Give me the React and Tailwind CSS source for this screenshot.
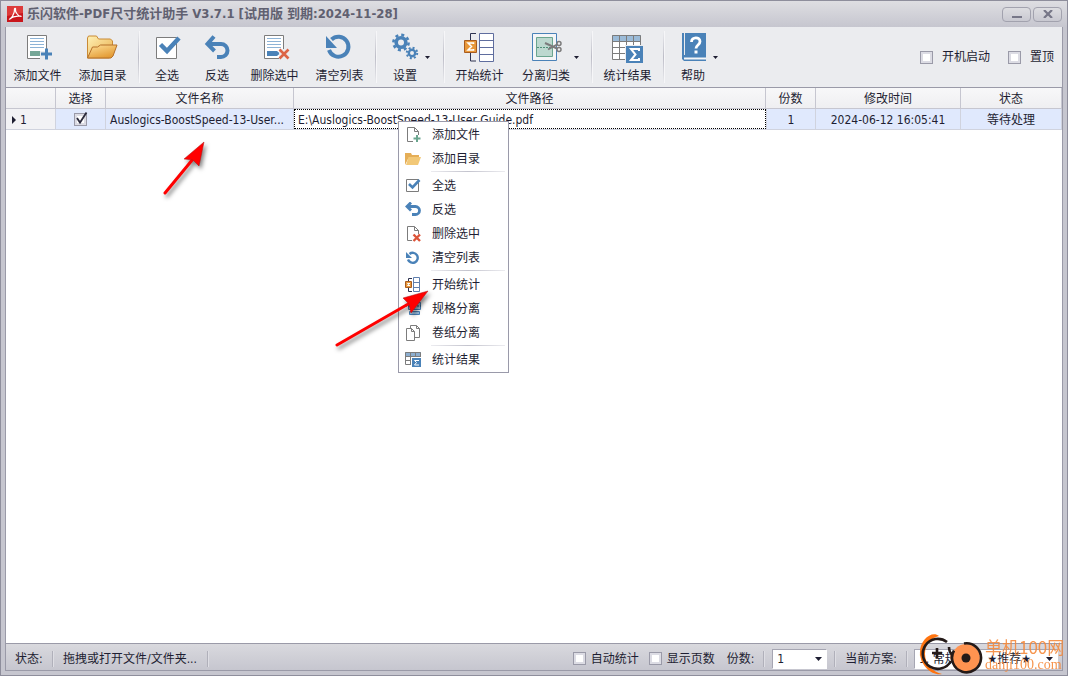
import React, { useState } from "react";
import clsx from "clsx";

const BLUE = "#4a82b8";
const GRAY = "#7c7c7c";

const AddFileIcon = () => (
  <svg width="32" height="32" viewBox="0 0 32 32">
    <path d="M6.500 4.500h19v23h-19z" fill="#fff" stroke={GRAY} />
    <path d="M9 7.500h14M9 10.500h14M9 13.500h14M9 16.500h14" stroke="#8db3d6" />
    <path d="M9 20h10v5H9z" fill="#76a797" />
    <path d="M19 20h12v9H19z" fill="#ebecef" />
    <path d="M25.500 17.500v11M20 23h11" stroke={BLUE} strokeWidth="3" />
  </svg>
);

const FolderIcon = () => (
  <svg width="32" height="32" viewBox="0 0 32 32">
    <defs>
      <linearGradient id="folderBack" x1="0" y1="0" x2="1" y2="1">
        <stop offset="0" stopColor="#fff1b5" />
        <stop offset="1" stopColor="#e9ad4b" />
      </linearGradient>
      <linearGradient id="folderFront" x1="0" y1="0" x2="0.6" y2="1">
        <stop offset="0" stopColor="#ffe19a" />
        <stop offset="1" stopColor="#e39a33" />
      </linearGradient>
    </defs>
    <path d="M1.500 27V7l1-2h8l2 3h12l2 2v14l-3 3z" fill="url(#folderBack)" stroke="#c98a35" />
    <path d="M1.500 27l5-11h5l3-2h16.500l-4 11-2 2z" fill="url(#folderFront)" stroke="#b5702a" />
  </svg>
);

const SelectAllIcon = () => (
  <svg width="32" height="32" viewBox="0 0 32 32">
    <path d="M5.500 6.500h20v21h-20z" fill="#fff" stroke={GRAY} />
    <path d="M9.500 13.500l6.500 6.500L28 7" fill="none" stroke={BLUE} strokeWidth="4.500" />
  </svg>
);

const InvertIcon = () => (
  <svg width="32" height="32" viewBox="0 0 32 32">
    <path d="M13 5.500L6.500 13l7 7M7 13h13a6.500 6.500 0 0 1 0 13h-4" fill="none" stroke={BLUE} strokeWidth="4" />
  </svg>
);

const DeleteIcon = () => (
  <svg width="32" height="32" viewBox="0 0 32 32">
    <path d="M6.500 4.500h19v23h-19z" fill="#fff" stroke={GRAY} />
    <path d="M9 7.500h14M9 10.500h14M9 13.500h14M9 16.500h14" stroke="#8db3d6" />
    <path d="M9 20h10l3 2.500-3 2.500H9z" fill={BLUE} />
    <path d="M21 18h9v11h-9z" fill="#ebecef" />
    <path d="M21.500 18.500l9 9M30.500 18.500l-9 9" stroke="#dc6446" strokeWidth="2.600" />
  </svg>
);

const ClearIcon = () => (
  <svg width="32" height="32" viewBox="0 0 32 32">
    <path d="M6 19A10 10 0 1 0 8.500 8.500" fill="none" stroke={BLUE} strokeWidth="4" />
    <path d="M3 5v12h11z" fill={BLUE} />
  </svg>
);

const GearIcon = () => (
  <svg width="32" height="32" viewBox="0 0 32 32" fill="none" stroke={BLUE}>
    <circle cx="12" cy="11.500" r="4.800" strokeWidth="3.600" />
    <circle cx="12" cy="11.500" r="7.600" strokeWidth="2.600" strokeDasharray="3 2.970" />
    <circle cx="23" cy="22" r="3.200" strokeWidth="2.400" />
    <circle cx="23" cy="22" r="5.200" strokeWidth="2" strokeDasharray="2 2.080" />
  </svg>
);

const StartIcon = () => (
  <svg width="32" height="32" viewBox="0 0 32 32">
    <path d="M13 2.500H7.500v8M7.500 21v9H13" fill="none" stroke="#2e3350" />
    <path d="M16.500 2.500h14v28h-14zM16.500 9.500h14M16.500 16.500h14M16.500 23.500h14" fill="#fff" stroke="#5f6d9e" />
    <path d="M1.500 9.500h12v12h-12z" fill="#e8983a" stroke="#a85c1f" />
    <path d="M10.500 13v-1H5l3.500 3.500L5 19h5.500v-1" fill="none" stroke="#fff" strokeWidth="1.500" />
  </svg>
);

const SplitIcon = () => (
  <svg width="32" height="32" viewBox="0 0 32 32">
    <path d="M2.500 2.500h24v27h-24z" fill="#f4f5f7" stroke={BLUE} />
    <path d="M6.500 6.500h16v19h-16z" fill="#bcd8cf" stroke="#6ba58f" />
    <path d="M7 16.500h16" stroke="#4f8f78" strokeDasharray="2 1" />
    <path d="M15 12l12 5.500M18 18.500l9-5" stroke={GRAY} strokeWidth="2" />
    <circle cx="29" cy="12.500" r="2" fill="none" stroke={GRAY} strokeWidth="1.500" />
    <circle cx="29" cy="18.500" r="2" fill="none" stroke={GRAY} strokeWidth="1.500" />
  </svg>
);

const ResultIcon = () => (
  <svg width="32" height="32" viewBox="0 0 32 32">
    <path d="M1.500 4.500h28v24h-28z" fill="#fff" />
    <path d="M1 4h29v6H1z" fill="#9bbbd8" />
    <path d="M1.500 4.500h28v24h-28zM1 10.500h29M1 16.500h29M1 22.500h29M8.500 4v25M15.500 4v25M22.500 4v25" fill="none" stroke={GRAY} />
    <path d="M14 14h18v18H14z" fill="#ebecef" />
    <path d="M15 15h17v17H15z" fill={BLUE} />
    <path d="M28 20v-2h-8l4.500 5.500L20 29h8v-2" fill="none" stroke="#fff" strokeWidth="2" />
  </svg>
);

const HelpIcon = () => (
  <svg width="32" height="32" viewBox="0 0 32 32">
    <path d="M5 2h2v24H5zM8 2h21v23H8z" fill={BLUE} />
    <path d="M5 24h24v6H7l-2-2z" fill={BLUE} />
    <path d="M7 26.500h22v2H7z" fill="#f4f6f8" />
    <path d="M14.500 11c0-5.500 8.500-5.500 8.500-.5 0 3.500-4 3.500-4 7" fill="none" stroke="#fff" strokeWidth="2.800" />
    <path d="M17.500 19.500h3v3h-3z" fill="#fff" />
  </svg>
);

const toolbar = [
  [
    { label: "添加文件", Icon: AddFileIcon },
    { label: "添加目录", Icon: FolderIcon },
  ],
  [
    { label: "全选", Icon: SelectAllIcon },
    { label: "反选", Icon: InvertIcon },
    { label: "删除选中", Icon: DeleteIcon },
    { label: "清空列表", Icon: ClearIcon },
  ],
  [{ label: "设置", Icon: GearIcon, dropdown: true }],
  [
    { label: "开始统计", Icon: StartIcon },
    { label: "分离归类", Icon: SplitIcon, dropdown: true },
  ],
  [{ label: "统计结果", Icon: ResultIcon }],
  [{ label: "帮助", Icon: HelpIcon, dropdown: true }],
];

const pageShape = <path d="M2.500.5h7l4 4v10h-11zM9.500.5v4h4" fill="#fff" stroke={GRAY} />;

const menuGroups = [
  [
    {
      label: "添加文件",
      icon: (
        <>
          {pageShape}
          <path d="M8 8h8v8H8z" fill="#fff" />
          <path d="M12 8v7M8.500 11.500h7" stroke="#6ba58f" strokeWidth="2" />
        </>
      ),
    },
    {
      label: "添加目录",
      icon: (
        <>
          <path d="M0 14V2h6l1 2h7v4H3z" fill="#e5ae57" />
          <path d="M3.500 6H16l-3 8H1z" fill="#f2c877" />
        </>
      ),
    },
  ],
  [
    {
      label: "全选",
      icon: (
        <>
          <path d="M1.500 1.500h12v12h-12z" fill="#fff" stroke={GRAY} />
          <path d="M4 6l3.500 3.500 7-7.500" fill="none" stroke={BLUE} strokeWidth="2.600" />
        </>
      ),
    },
    {
      label: "反选",
      icon: <path d="M6 .5L2 4.500l4 4M2 4.500h8.500a3.500 3.500 0 0 1 0 8H7" fill="none" stroke={BLUE} strokeWidth="2.800" />,
    },
    {
      label: "删除选中",
      icon: (
        <>
          {pageShape}
          <path d="M7 8h9v8H7z" fill="#fff" />
          <path d="M8.500 8.500l6.500 6.500M15 8.500l-6.500 6.500" stroke="#dc5439" strokeWidth="2.400" />
        </>
      ),
    },
    {
      label: "清空列表",
      icon: (
        <>
          <path d="M3 9.500A5 5 0 1 0 4.500 4" fill="none" stroke={BLUE} strokeWidth="2.400" />
          <path d="M1 2v6h6z" fill={BLUE} />
        </>
      ),
    },
  ],
  [
    {
      label: "开始统计",
      icon: (
        <>
          <path d="M7 1.500H3.500V5M3.500 11v3.500H7" fill="none" stroke="#2e3350" />
          <path d="M8.500.5h6v14h-6zM8.500 5.500h6M8.500 10.500h6" fill="#fff" stroke="#5f7fae" />
          <path d="M.5 4.500h6v6h-6z" fill="#e8983a" stroke="#a85c1f" />
          <path d="M5 6.500H2.500L4 7.500 2.500 8.500H5" fill="none" stroke="#fff" />
        </>
      ),
    },
    {
      label: "规格分离",
      icon: (
        <>
          <path d="M3.500 1.500h12v7h-12z" fill="#b5d0e6" stroke={BLUE} />
          <path d="M0 5h16" stroke="#2e4e70" strokeDasharray="2 1" />
          <path d="M4.500 10.500h10v3h-10z" fill="#9bbfe0" stroke={BLUE} />
        </>
      ),
    },
    {
      label: "卷纸分离",
      icon: (
        <>
          <path d="M5.500.5h6l3 3v9h-9zM11.500.5v3h3" fill="#fff" stroke={GRAY} />
          <path d="M1.500 3.500h5l3 3v9h-8zM6.500 3.500v3h3" fill="#fff" stroke={GRAY} />
        </>
      ),
    },
  ],
  [
    {
      label: "统计结果",
      icon: (
        <>
          <path d="M0 0h16v4H0z" fill="#8caed0" />
          <path d="M.5.5h15v12H.5zM0 4.500h16M0 8.500h16M5.500 0v13M10.500 0v13" fill="none" stroke={GRAY} />
          <path d="M6 5h10v10H6z" fill="#fff" />
          <path d="M7 6h9v9H7z" fill={BLUE} />
          <path d="M14 8.500H9.500l2 2-2 2.500H14" fill="none" stroke="#fff" />
        </>
      ),
    },
  ],
];

const Divider = () => (
  <span className="mr-0.5 ml-[3px] my-1 w-0.5 self-stretch border-r border-[#f6f6f8] bg-gradient-to-b from-[#ebecef] via-[#bdbdc7] to-[#ebecef]" />
);

const StatusDivider = () => (
  <span className="h-4 w-0.5 shrink-0 border-r border-[#dedee4] bg-[#b0b0ba]" />
);

const Caret = () => (
  <svg width="5" height="3" viewBox="0 0 5 3" className="shrink-0">
    <path d="M0 0h5L2.500 3z" fill="#1e1e32" />
  </svg>
);

const ToolButton = ({ label, Icon, dropdown }) => {
  const wide = label.length > 2;
  return (
    <button
      type="button"
      className={clsx(
        "flex shrink-0 items-center pt-px whitespace-nowrap",
        dropdown ? "pl-1.5" : "justify-center",
        dropdown && (wide ? "w-[76px]" : "w-[61px]"),
        !dropdown && (wide ? "w-[65px]" : "w-[50px]")
      )}
    >
      <span
        className={clsx(
          "flex flex-col items-center gap-[5px]",
          dropdown && (wide ? "w-14" : "w-10")
        )}
      >
        <Icon />
        <span className="leading-4">{label}</span>
      </span>
      {dropdown && <Caret />}
    </button>
  );
};

const CheckOption = ({ label, className }) => (
  <label className={clsx("flex items-center whitespace-nowrap", className)}>
    <input
      type="checkbox"
      className="size-[13px] appearance-none border border-[#9a9aa8] bg-white ring-2 ring-inset ring-[#dcdce4] checked:bg-[#4a82b8]"
    />
    {label}
  </label>
);

const StatusSelect = ({ id, className, children }) => (
  <span className={clsx("relative flex items-center", className)}>
    <select
      id={id}
      className="h-5 w-full appearance-none border border-t-[#a6a6b2] border-r-white border-b-white border-l-[#a6a6b2] bg-white pl-1"
    >
      {children}
    </select>
    <svg width="7" height="4" viewBox="0 0 7 4" className="pointer-events-none absolute right-[5px]">
      <path d="M0 0h7L3.500 4z" fill="#1e1e32" />
    </svg>
  </span>
);

const TitleBar = () => (
  <header className="flex h-[26px] shrink-0 items-center">
    <svg width="16" height="16" viewBox="0 0 16 16" className="ml-0.5 shrink-0">
      <path d="M0 0h16v16H0z" fill="#c9151b" />
      <path d="M0 0h16v7L0 10z" fill="#dd3b3a" />
      <path d="M2 13c2 1 6-6 5.500-10 0-1 1.500-1 1 .5C8 6 11 10 14 10.500c1-.5-6-1-11 2" fill="none" stroke="#fff" strokeWidth="1.200" />
    </svg>
    <h1 className="ml-1 grow truncate text-[13px] leading-5 font-bold text-[#606070]">
      乐闪软件-PDF尺寸统计助手 V3.7.1 [试用版 到期:2024-11-28]
    </h1>
    <div className="mr-px flex gap-0.5">
      <button
        type="button"
        aria-label="最小化"
        className="flex h-[15px] w-[29px] items-center justify-center rounded-sm border border-[#a2a2ae] bg-gradient-to-b from-[#dddde1] to-[#c9c9d1]"
      >
        <svg width="10" height="8" viewBox="0 0 10 8">
          <path d="M0 6h10v2H0z" fill="#777788" />
        </svg>
      </button>
      <button
        type="button"
        aria-label="关闭"
        className="flex h-[15px] w-[29px] items-center justify-center rounded-sm border border-[#a2a2ae] bg-gradient-to-b from-[#dddde1] to-[#c9c9d1]"
      >
        <svg width="10" height="8" viewBox="0 0 10 8">
          <path d="M1 0l8 8M9 0L1 8" stroke="#777788" strokeWidth="2.200" />
        </svg>
      </button>
    </div>
  </header>
);

const Toolbar = () => (
  <div className="flex h-[60px] shrink-0 items-stretch bg-[#ebecef]">
    <div className="-ml-px flex">
      {toolbar.map((group, i) => (
        <React.Fragment key={group[0].label}>
          {i > 0 && <Divider />}
          {group.map((item) => (
            <ToolButton key={item.label} {...item} />
          ))}
        </React.Fragment>
      ))}
    </div>
    <div className="ml-auto flex items-center gap-[18px] pr-2">
      <CheckOption label="开机启动" className="gap-[9px]" />
      <CheckOption label="置顶" className="gap-[9px]" />
    </div>
  </div>
);

const headers = ["", "选择", "文件名称", "文件路径", "份数", "修改时间", "状态"];

const FileTable = () => {
  const [checked, setChecked] = useState(true);

  return (
    <table className="w-full table-fixed border-separate border-spacing-0 text-center leading-4">
      <colgroup>
        <col className="w-[50px]" />
        <col className="w-[50px]" />
        <col className="w-[188px]" />
        <col />
        <col className="w-[50px]" />
        <col className="w-[145px]" />
        <col className="w-[101px]" />
      </colgroup>
      <thead>
        <tr className="h-[21px] bg-gradient-to-b from-[#f8f8f9] to-[#eeeef1]">
          {headers.map((h) => (
            <th key={h} className="border-r border-b border-[#c6c6d0] p-0 pt-0.5 font-normal">
              {h}
            </th>
          ))}
        </tr>
      </thead>
      <tbody>
        <tr className="h-[21px] bg-[#e0e9fd] *:border-b *:border-[#d0d3de] *:p-0">
          <td className="border-r bg-[#f2f2f5]">
            <span className="flex items-center gap-1 pt-0.5 pl-1.5">
              <svg width="4" height="8" viewBox="0 0 4 8">
                <path d="M0 0l4 4-4 4z" fill="#1e1e32" />
              </svg>
              1
            </span>
          </td>
          <td className="border-r">
            <label className="relative flex items-center justify-center">
              <input
                type="checkbox"
                aria-label="选择文件"
                checked={checked}
                onChange={(e) => setChecked(e.target.checked)}
                className="size-[13px] appearance-none border border-[#9a9aa8] bg-white ring-2 ring-inset ring-[#dcdce4]"
              />
              {checked && (
                <svg width="14" height="14" viewBox="0 0 14 14" className="pointer-events-none absolute">
                  <path d="M3 6l3 4.500L12.500.5" fill="none" stroke="#2a2a3c" strokeWidth="1.800" />
                </svg>
              )}
            </label>
          </td>
          <td className="border-r text-left">
            <span className="block truncate pt-0.5 pl-1">Auslogics-BoostSpeed-13-User...</span>
          </td>
          <td className="text-left">
            <span className="block truncate border border-dotted border-black bg-white pt-0.5 pl-[3px]">
              E:\Auslogics-BoostSpeed-13-User Guide.pdf
            </span>
          </td>
          <td className="border-r border-l">
            <span className="block pt-0.5">1</span>
          </td>
          <td className="border-r">
            <span className="block pt-0.5">2024-06-12 16:05:41</span>
          </td>
          <td className="border-r">
            <span className="block pt-0.5">等待处理</span>
          </td>
        </tr>
      </tbody>
    </table>
  );
};

const ContextMenu = () => (
  <div
    role="menu"
    className="absolute top-[120px] left-[397px] w-[111px] border border-[#9a9aaa] bg-white pb-px"
  >
    {menuGroups.map((group, i) => (
      <React.Fragment key={group[0].label}>
        {i > 0 && (
          <div className="ml-8 flex h-[3px] items-center">
            <div className="h-px w-[74px] bg-gradient-to-r from-[#ececf0] via-[#c4c4ce] to-[#ececf0]" />
          </div>
        )}
        {group.map((item) => (
          <button
            key={item.label}
            type="button"
            role="menuitem"
            className="flex h-6 w-full items-center gap-[11px] pt-px pl-1.5 hover:bg-[#e0e9fd]"
          >
            <svg width="16" height="16" viewBox="0 0 16 16">
              {item.icon}
            </svg>
            {item.label}
          </button>
        ))}
      </React.Fragment>
    ))}
  </div>
);

const StatusBar = () => (
  <footer className="flex h-[27px] shrink-0 items-center border-t border-[#9a9aa8] bg-gradient-to-b from-[#d9d9de] to-[#c6c6cf] pt-[3px] pr-1 whitespace-nowrap">
    <span className="w-[46px] pl-[9px]">状态:</span>
    <StatusDivider />
    <span className="w-[153px] pl-[9px]">拖拽或打开文件/文件夹...</span>
    <StatusDivider />
    <CheckOption label="自动统计" className="ml-auto gap-[5px]" />
    <CheckOption label="显示页数" className="ml-2.5 gap-[5px]" />
    <label htmlFor="copies" className="mr-[9px] ml-3">
      份数:
    </label>
    <StatusDivider />
    <StatusSelect id="copies" className="mx-[7px] w-[55px]">
      <option>1</option>
      <option>2</option>
      <option>3</option>
    </StatusSelect>
    <StatusDivider />
    <label htmlFor="plan" className="mx-[9px]">
      当前方案:
    </label>
    <StatusDivider />
    <StatusSelect id="plan" className="ml-[6px] w-36">
      <option>1. 常规模式{"\u00a0\u00a0"}★推荐★</option>
    </StatusSelect>
  </footer>
);

const Arrow = ({ className, width, height, shaft, head }) => (
  <svg
    width={width}
    height={height}
    viewBox={`0 0 ${width} ${height}`}
    className={clsx("pointer-events-none absolute drop-shadow-[2px_3px_2px_rgba(0,0,0,0.5)]", className)}
  >
    <path d={shaft} stroke="#f00" strokeWidth="3" strokeLinecap="round" />
    <path d={head} fill="#f00" stroke="#b01010" strokeWidth="0.500" />
  </svg>
);

const Watermark = () => (
  <div className="pointer-events-none absolute right-0 bottom-0 flex items-center">
    <svg width="68" height="44" viewBox="0 0 68 44">
      <path d="M22 5C15-1 2 9 3 23c1 12 12 22 22 20-9-2-17-10-17-20S14 7 22 5z" fill="#ff7410" />
      <path d="M30 11a15 15 0 1 0 4 19" fill="none" stroke="#241a18" strokeWidth="2.600" />
      <path d="M20 17v10M15 22h10M32 16c0 5 3 8 5 9" fill="none" stroke="#241a18" strokeWidth="2.600" />
      <circle cx="49" cy="27" r="14" fill="#ff9350" />
      <path d="M47 12.500a14.500 14.500 0 1 1-10 7" fill="none" stroke="#241a18" strokeWidth="2.600" />
      <circle cx="49" cy="27" r="4.500" fill="#241a18" />
    </svg>
    <div className="w-[82px] pt-1 whitespace-nowrap text-[#f58a3c] opacity-90">
      <div className="font-['Noto_Sans_CJK_SC',sans-serif] text-[17px] leading-5">单机100网</div>
      <div className="font-['Liberation_Serif',serif] text-[14px] leading-4">danji100.com</div>
    </div>
  </div>
);

const App = () => (
  <div className="relative flex min-h-screen flex-col border border-[#8e8e9c] bg-gradient-to-b from-[#dedee2] via-[#c6c6cf] via-[26px] to-[#c6c6cf] px-1 pb-1 font-['DejaVu_Sans_Condensed','Noto_Sans','Noto_Sans_CJK_SC',sans-serif] text-[12px] text-[#1e1e32]">
    <TitleBar />
    <div className="flex grow flex-col border border-t-0 border-[#9a9aa8]">
      <Toolbar />
      <main className="grow border-t border-[#9a9aa8] bg-white">
        <FileTable />
      </main>
      <StatusBar />
    </div>
    <ContextMenu />
    <Arrow
      className="top-[137px] left-[158px]"
      width={50}
      height={60}
      shaft="M6 55L34 21"
      head="M45 4L40 28 34 22 25 21z"
    />
    <Arrow
      className="top-[284px] left-[329px]"
      width={105}
      height={68}
      shaft="M7 60L80 18"
      head="M98 6L81 28 79 19 73 13z"
    />
    <Watermark />
  </div>
);

export default App;
